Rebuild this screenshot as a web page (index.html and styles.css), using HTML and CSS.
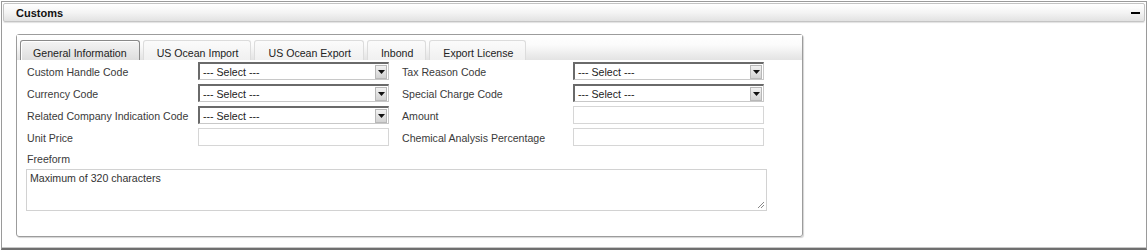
FILE: index.html
```html
<!DOCTYPE html>
<html lang="en">
<head>
  <meta charset="UTF-8">
  <title>Customs</title>
  <link rel="stylesheet" href="styles.css">
</head>
<body>
  <div class="panel">
    <div class="panel-header">
      <span class="panel-title">Customs</span>
      <span class="collapse-btn"><span class="bar"></span></span>
    </div>
    <div class="panel-body">
      <div class="tab-box">
        <ul class="tabs">
          <li class="tab active">General Information</li>
          <li class="tab">US Ocean Import</li>
          <li class="tab">US Ocean Export</li>
          <li class="tab">Inbond</li>
          <li class="tab">Export License</li>
        </ul>

        <div class="form-grid">
          <label class="field-label">Custom Handle Code</label>
          <div class="select"><span class="select-text">--- Select ---</span><span class="select-btn"><svg width="7" height="4" viewBox="0 0 7 4"><path d="M0 0h7L3.5 4z" fill="#111"/></svg></span></div>
          <label class="field-label">Tax Reason Code</label>
          <div class="select"><span class="select-text">--- Select ---</span><span class="select-btn"><svg width="7" height="4" viewBox="0 0 7 4"><path d="M0 0h7L3.5 4z" fill="#111"/></svg></span></div>

          <label class="field-label">Currency Code</label>
          <div class="select"><span class="select-text">--- Select ---</span><span class="select-btn"><svg width="7" height="4" viewBox="0 0 7 4"><path d="M0 0h7L3.5 4z" fill="#111"/></svg></span></div>
          <label class="field-label">Special Charge Code</label>
          <div class="select"><span class="select-text">--- Select ---</span><span class="select-btn"><svg width="7" height="4" viewBox="0 0 7 4"><path d="M0 0h7L3.5 4z" fill="#111"/></svg></span></div>

          <label class="field-label">Related Company Indication Code</label>
          <div class="select"><span class="select-text">--- Select ---</span><span class="select-btn"><svg width="7" height="4" viewBox="0 0 7 4"><path d="M0 0h7L3.5 4z" fill="#111"/></svg></span></div>
          <label class="field-label">Amount</label>
          <div class="text-input"></div>

          <label class="field-label">Unit Price</label>
          <div class="text-input"></div>
          <label class="field-label">Chemical Analysis Percentage</label>
          <div class="text-input"></div>
        </div>

        <div class="freeform">
          <label class="field-label">Freeform</label>
          <div class="textarea">
            Maximum of 320 characters
            <svg class="grip" width="8" height="8" viewBox="0 0 8 8"><path d="M7 1L1 7M7 4L4 7" stroke="#888" stroke-width="1"/></svg>
          </div>
        </div>
      </div>
    </div>
  </div>
</body>
</html>
```

FILE: styles.css
```css
body {
  margin: 0;
  font-family: 'Liberation Sans', Arial, sans-serif;
  font-size: 10.6px;
  color: #333;
  background: #fff;
}

.panel {
  box-sizing: border-box;
  height: 249px;
  margin: 1px 1px 0 1px;
  border: 1px solid #9a9a9a;
  border-bottom: 2px solid #6f6f6f;
  box-shadow: inset 0 -1px 0 #c8c8c8;
}

.panel-header {
  display: flex;
  align-items: center;
  justify-content: space-between;
  height: 17px;
  margin: 1px 1px 0 1px;
  padding: 0 3px 0 12px;
  border: 1px solid #c4c4c4;
  border-radius: 2px;
  background: linear-gradient(#ffffff, #f4f4f4 50%, #e2e2e2);
  box-shadow: 0 1px 1px rgba(0, 0, 0, 0.12);
}

.panel-title {
  font-weight: bold;
  font-size: 11px;
  color: #111;
}

.collapse-btn {
  display: flex;
  align-items: center;
  justify-content: center;
  width: 12px;
  height: 12px;
  background: linear-gradient(#fdfdfd, #e6e6e6);
  border-radius: 2px;
}

.collapse-btn .bar {
  width: 9px;
  height: 2px;
  background: #000;
}

.panel-body {
  padding: 12px 0 0 14px;
}

.tab-box {
  box-sizing: border-box;
  width: 787px;
  height: 203px;
  border: 1px solid #9c9c9c;
  border-radius: 3px;
  box-shadow: 1px 1px 1px #d4d4d4;
}

.tabs {
  display: flex;
  list-style: none;
  margin: 0;
  padding: 5px 0 0 3px;
  height: 20px;
  background: linear-gradient(#ffffff, #fbfbfb 40%, #e3e3e3);
}

.tab {
  box-sizing: border-box;
  height: 20px;
  margin-right: 3px;
  padding: 5px 12px 0 13px;
  font-size: 10.6px;
  line-height: 14px;
  color: #222;
  border: 1px solid #dcdcdc;
  border-bottom: none;
  border-radius: 3px 3px 0 0;
  background: linear-gradient(#fbfbfb, #f0f0f0);
}

.tab.active {
  padding: 5px 12px 0 12px;
  border-color: #8a8a8a;
  background: linear-gradient(#f4f4f4, #dedede);
  box-shadow: inset 1px 1px 0 #fff;
}

.form-grid {
  display: grid;
  grid-template-columns: 171px 204px 171px 193px;
  grid-auto-rows: 18px;
  row-gap: 4px;
  margin-top: 2px;
  padding-left: 10px;
}

.field-label {
  display: flex;
  align-items: center;
  padding-top: 2px;
  font-size: 10.6px;
  color: #3a3a3a;
  white-space: nowrap;
}

.select {
  box-sizing: border-box;
  display: flex;
  align-items: center;
  width: 191px;
  height: 18px;
  border: 1px solid #c8c8c8;
  border-top: 2px solid #6a6a6a;
  border-left: 2px solid #6a6a6a;
  background: #fff;
}

.select-text {
  flex: 1;
  padding-left: 3px;
  font-size: 10.6px;
  color: #222;
}

.select-btn {
  display: flex;
  align-items: center;
  justify-content: center;
  width: 12px;
  height: 14px;
  margin-right: 1px;
  border: 1px solid #b8b8b8;
  box-sizing: border-box;
  background: linear-gradient(#f2f2f2, #d2d2d2);
}

.text-input {
  box-sizing: border-box;
  width: 191px;
  height: 18px;
  border: 1px solid #d6d6d6;
  background: #fff;
}

.freeform {
  padding-left: 10px;
  margin-top: 4px;
}

.freeform .field-label {
  height: 18px;
  padding-top: 0;
}

.textarea {
  position: relative;
  box-sizing: border-box;
  width: 741px;
  height: 42px;
  margin-left: -1px;
  margin-top: 1px;
  padding: 2px 3px;
  border: 1px solid #d2d2d2;
  font-size: 10.6px;
  color: #333;
  background: #fff;
}

.grip {
  position: absolute;
  right: 1px;
  bottom: 1px;
}
```
